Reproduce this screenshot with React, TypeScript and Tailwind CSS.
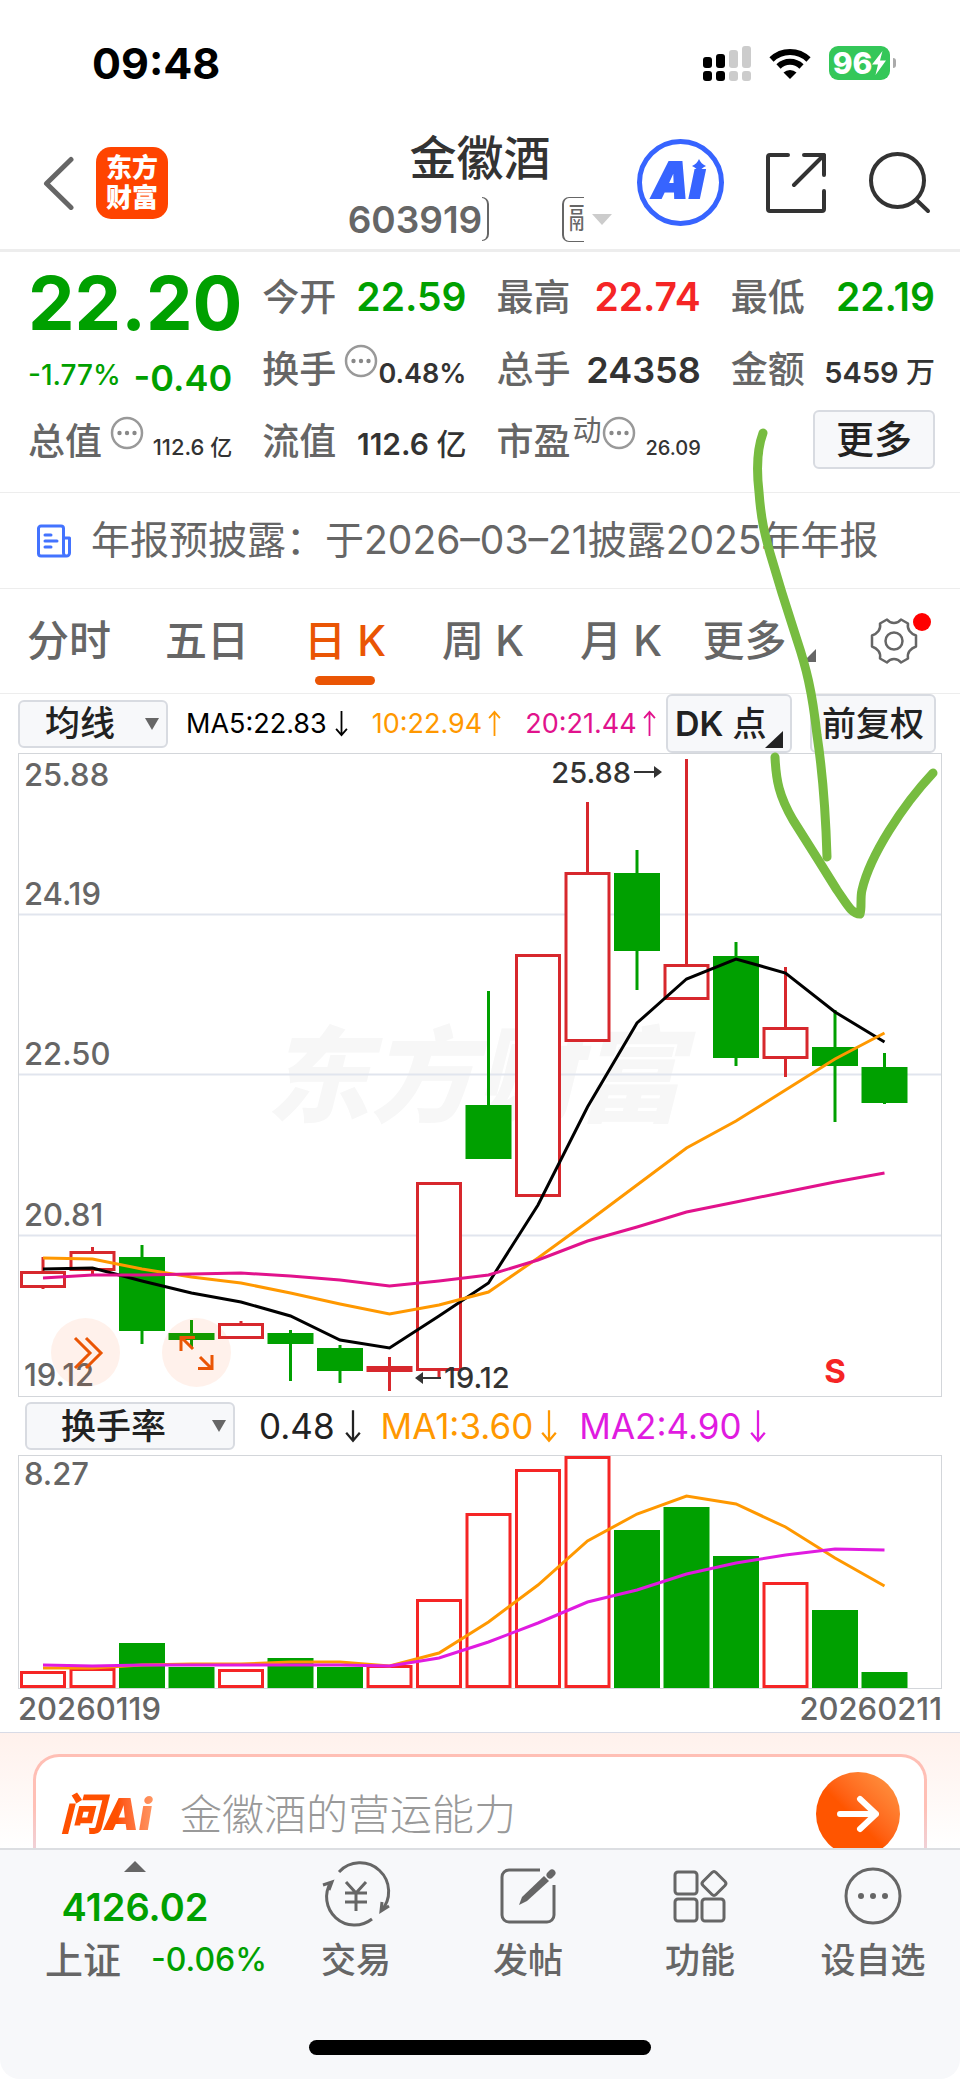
import type { ReactNode } from "react";

type Candle = { up: boolean; top: number; bottom: number; high: number; low: number; vol: number; volUp?: boolean };

// y values are in chart units, measured from the top edge of each plot
const candles: Candle[] = [
    { up: true, top: 518, bottom: 535, high: 504, low: 536, vol: 216 },
    { up: true, top: 498, bottom: 518, high: 494, low: 522, vol: 213 },
    { up: false, top: 504, bottom: 578, high: 492, low: 591, vol: 188 },
    { up: false, top: 580, bottom: 587, high: 567, low: 594, vol: 212 },
    { up: true, top: 570, bottom: 586, high: 568, low: 586, vol: 214 },
    { up: false, top: 580, bottom: 591, high: 577, low: 628, vol: 203 },
    { up: false, top: 595, bottom: 618, high: 592, low: 630, vol: 212 },
    { up: true, top: 613, bottom: 619, high: 604, low: 638, vol: 210 },
    { up: true, top: 429, bottom: 618, high: 429, low: 624, vol: 144 },
    { up: false, top: 352, bottom: 406, high: 238, low: 406, vol: 58, volUp: true },
    { up: true, top: 201, bottom: 444, high: 201, low: 444, vol: 14 },
    { up: true, top: 119, bottom: 289, high: 49, low: 289, vol: 1 },
    { up: false, top: 120, bottom: 198, high: 97, low: 237, vol: 75 },
    { up: true, top: 211, bottom: 247, high: 6, low: 247, vol: 52, volUp: false },
    { up: false, top: 203, bottom: 305, high: 189, low: 313, vol: 101 },
    { up: true, top: 274, bottom: 306, high: 214, low: 324, vol: 127 },
    { up: false, top: 294, bottom: 313, high: 257, low: 369, vol: 155 },
    { up: false, top: 314, bottom: 350, high: 300, low: 351, vol: 217 },
];

const ma5 = [516, 515, 528, 540, 549, 563, 587, 595, 563, 530, 452, 354, 270, 226, 206, 220, 259, 289];
const ma10 = [505, 506, 516, 524, 530, 540, 551, 561, 552, 539, 505, 469, 432, 395, 368, 337, 306, 280];
const ma20 = [525, 522, 522, 521, 520, 523, 527, 533, 528, 522, 507, 488, 474, 459, 449, 439, 429, 420];
const volMa1 = [213, 213, 210, 209, 209, 207, 207, 211, 198, 167, 130, 86, 59, 41, 49, 72, 103, 131];
const volMa2 = [210, 211, 210, 210, 210, 210, 210, 211, 203, 187, 168, 147, 135, 119, 108, 100, 94, 95];

const priceLabels = [
    { text: "25.88", y: 33 },
    { text: "24.19", y: 152 },
    { text: "22.50", y: 312 },
    { text: "20.81", y: 473 },
    { text: "19.12", y: 633 },
];

const tabs = ["分时", "五日", "日 K", "周 K", "月 K"];

const candleX = (i: number) => 25 + i * 49.5;
const toPoints = (values: number[]) => values.map((y, i) => `${candleX(i)},${y}`).join(" ");

const MoreDots = () => (
    <svg viewBox="0 0 34 34" className="size-[34px] shrink-0 self-start" aria-hidden="true">
        <circle cx="17" cy="17" r="15" fill="none" stroke="#999" strokeWidth="2.5" />
        <circle cx="9.5" cy="17" r="2.2" fill="#888" />
        <circle cx="17" cy="17" r="2.2" fill="#888" />
        <circle cx="24.5" cy="17" r="2.2" fill="#888" />
    </svg>
);

const Trend = ({ up = false, className = "" }: { up?: boolean; className?: string }) => (
    <svg viewBox="0 0 14 30" className={className} fill="none" stroke="currentColor" strokeWidth="2" aria-hidden="true">
        {up ? <path d="M7 29V2M1 9l6-7 6 7" /> : <path d="M7 1v27M1 21l6 7 6-7" />}
    </svg>
);

const Quote = ({ label, children }: { label: string; children: ReactNode }) => (
    <div className="flex h-[72px] items-baseline whitespace-nowrap">
        <span className="text-[37px] leading-[72px] font-medium text-[#666]">{label}</span>
        {children}
    </div>
);

const StatusBar = () => (
    <div className="flex h-[126px] items-center justify-between pr-[64px] pl-[92px]">
        <span className="text-[43px] leading-none font-bold text-black">09:48</span>
        <div className="flex items-center gap-[18px]">
            <svg viewBox="0 0 48 35" className="h-[35px] w-12" aria-hidden="true">
                <g fill="#000">
                    <rect x="0" y="11" width="9" height="11" rx="3" />
                    <rect x="0" y="25" width="9" height="10" rx="3" />
                    <rect x="13" y="8" width="9" height="14" rx="3" />
                    <rect x="13" y="25" width="9" height="10" rx="3" />
                </g>
                <g fill="#ccc">
                    <rect x="26" y="4" width="9" height="18" rx="3" />
                    <rect x="26" y="25" width="9" height="10" rx="3" />
                    <rect x="39" y="0" width="9" height="22" rx="3" />
                    <rect x="39" y="25" width="9" height="10" rx="3" />
                </g>
            </svg>
            <svg viewBox="0 0 42 31" className="h-[31px] w-[42px]" aria-hidden="true">
                <g fill="none" stroke="#000" strokeWidth="6">
                    <path d="M2.5 11.5a26.500 26.500 0 0 1 37 0" />
                    <path d="M9.500 18.500a16.500 16.500 0 0 1 23 0" />
                </g>
                <path d="M21 31l-6.500-6.500a9.500 9.500 0 0 1 13 0z" fill="#000" />
            </svg>
            <div className="flex items-center gap-[3px]">
                <div className="flex h-[34px] w-[61px] items-center justify-center rounded-[9px] bg-[#34c759] text-white">
                    <span className="text-[30px] leading-none font-extrabold">96</span>
                    <svg viewBox="0 0 14 24" className="h-6 w-3.5" aria-hidden="true">
                        <path d="M10.500 0L0 13.500h6L3.500 24 14 9.500H8z" fill="#fff" />
                    </svg>
                </div>
                <span className="h-[10px] w-[3px] rounded-r-full bg-[#aaa]" />
            </div>
        </div>
    </div>
);

const Header = () => (
    <header className="grid h-[126px] grid-cols-[1fr_auto_1fr] border-b-[3px] border-[#ededed] px-[28px]">
        <div className="flex items-center pb-[10px] pl-3.5">
            <button aria-label="返回">
                <svg viewBox="0 0 54 54" className="size-[54px]" aria-hidden="true">
                    <path d="M29 3.500L4.500 27.500 29 51.500" fill="none" stroke="#666" strokeWidth="5" strokeLinecap="round" strokeLinejoin="round" />
                </svg>
            </button>
            <a href="#home" className="grid size-[72px] place-content-center rounded-[15px] bg-[#ff4400] text-center text-[26px] leading-[30px] font-black text-white">
                东方
                <br />
                财富
            </a>
        </div>
        <div className="pt-1">
            <h1 className="text-center text-[47px] leading-[56px] font-medium text-[#333]">金徽酒</h1>
            <div className="flex h-[60px] items-center pt-1.5 text-[#666]">
                <span className="text-[37px] leading-none font-semibold">603919</span>
                <span className="h-[44px] w-[7px] rounded-r-[7px] border-y border-r-2 border-[#666]" />
                <span className="ml-[73px] h-[45px] w-[22px] overflow-hidden rounded-l-[7px] border-y border-l-2 border-[#666] pl-1 text-[29px] leading-[42px] whitespace-nowrap">融</span>
                <svg viewBox="0 0 20 11" className="ml-2 h-[11px] w-5" aria-hidden="true">
                    <path d="M0 0h20L10 11z" fill="#ccc" />
                </svg>
            </div>
        </div>
        <div className="flex items-center justify-end gap-[42px] pb-[10px]">
            <button aria-label="Ai">
                <svg viewBox="0 0 87 87" className="size-[87px]" aria-hidden="true">
                    <circle cx="43.500" cy="43.500" r="41" fill="#fff" stroke="#3764ff" strokeWidth="5" />
                    <g className="font-['Open_Sans',sans-serif]" fontSize="50" fontWeight="800" fontStyle="italic" fill="#3764ff" stroke="#3764ff" strokeWidth="2">
                        <text x="17" y="59">A</text>
                        <text x="52" y="59">ı</text>
                    </g>
                    <path d="M62 20q2 5 7 7-5 2-7 7-2-5-7-7 5-2 7-7z" fill="#3764ff" />
                </svg>
            </button>
            <button aria-label="分享">
                <svg viewBox="0 0 60 60" className="size-[60px]" fill="none" stroke="#333" strokeWidth="4" strokeLinecap="round" strokeLinejoin="round" aria-hidden="true">
                    <path d="M22 2H4a2 2 0 0 0-2 2v52a2 2 0 0 0 2 2h52a2 2 0 0 0 2-2V38M38 2h20v20M58 2L28 32" />
                </svg>
            </button>
            <button aria-label="搜索">
                <svg viewBox="0 0 64 64" className="size-[64px]" fill="none" stroke="#333" strokeWidth="4" strokeLinecap="round" aria-hidden="true">
                    <circle cx="29.500" cy="29.500" r="26.500" />
                    <path d="M48.500 49L60 60" />
                </svg>
            </button>
        </div>
    </header>
);

const QuotePanel = () => (
    <section className="grid grid-cols-4 gap-x-[30px] border-b border-[#ededed] pt-[10px] pr-[25px] pb-[14px] pl-[28px]">
        <strong className="flex h-[72px] items-center pt-2.5 text-[74px] leading-none font-bold text-[#00a000]">22.20</strong>
        <Quote label="今开">
            <span className="ml-auto text-[39px] font-semibold text-[#00a000]">22.59</span>
        </Quote>
        <Quote label="最高">
            <span className="ml-auto text-[39px] font-semibold text-[#f52525]">22.74</span>
        </Quote>
        <Quote label="最低">
            <span className="ml-auto text-[39px] font-semibold text-[#00a000]">22.19</span>
        </Quote>

        <div className="flex h-[72px] items-center justify-between pt-4 text-[#00a000]">
            <span className="self-start text-[28px] leading-[50px] font-medium">-1.77%</span>
            <span className="text-[36px] leading-none font-semibold">-0.40</span>
        </div>
        <Quote label="换手">
            <span className="ml-2 self-start pt-2.5"><MoreDots /></span>
            <span className="ml-auto text-[27px] font-semibold text-[#333]">0.48%</span>
        </Quote>
        <Quote label="总手">
            <span className="ml-auto text-[36px] font-semibold text-[#333]">24358</span>
        </Quote>
        <Quote label="金额">
            <span className="ml-auto text-[29px] font-semibold text-[#333]">5459 <span className="font-medium">万</span></span>
        </Quote>

        <Quote label="总值">
            <span className="ml-2 self-start pt-2.5"><MoreDots /></span>
            <span className="ml-auto text-[22px] font-medium text-[#333]">112.6 亿</span>
        </Quote>
        <Quote label="流值">
            <span className="ml-auto text-[30px] font-semibold text-[#333]">112.6 <span className="font-medium">亿</span></span>
        </Quote>
        <Quote label="市盈">
            <span className="self-start pl-0.5 text-[29px] leading-[50px] text-[#666]">动</span>
            <span className="self-start pt-2.5"><MoreDots /></span>
            <span className="ml-auto text-[20px] font-medium text-[#333]">26.09</span>
        </Quote>
        <div className="flex h-[72px] items-center justify-end pb-1.5">
            <button className="h-[59px] w-[122px] rounded-md border-2 border-[#d8dbe1] bg-[#f7f8fa] text-[38px] leading-none font-medium text-[#222]">更多</button>
        </div>
    </section>
);

const News = () => (
    <a href="#news" className="flex h-24 items-center gap-5 border-b border-[#ededed] pl-[37px] text-[39px] text-[#666]">
        <svg viewBox="0 0 34 34" className="size-[34px] shrink-0" fill="none" stroke="#4373ff" strokeWidth="3" strokeLinecap="round" strokeLinejoin="round" aria-hidden="true">
            <path d="M26 32H4a2.500 2.500 0 0 1-2.500-2.500v-25A2.500 2.500 0 0 1 4 2h20a2.500 2.500 0 0 1 2.500 2.500V29a3 3 0 0 0 6 0V14h-6M29.500 32H26M8 11h6M8 17h12M8 23h6" />
        </svg>
        <span className="whitespace-nowrap">年报预披露：于2026–03–21披露2025年年报</span>
    </a>
);

const Tabs = () => (
    <nav className="grid h-[105px] grid-cols-[repeat(6,23fr)_22fr] border-b border-[#ededed] text-[42px] leading-none font-medium text-[#666]">
        {tabs.map((tab) => (
            <button key={tab} className={tab === "日 K" ? "relative text-[#ea5504]" : "relative"}>
                {tab}
                {tab === "日 K" && <span className="absolute bottom-2 left-1/2 h-[9px] w-[60px] -translate-x-1/2 rounded-full bg-[#ea5504]" />}
            </button>
        ))}
        <button className="flex items-center justify-center gap-4">
            更多
            <svg viewBox="0 0 13 13" className="mt-7 size-[13px]" aria-hidden="true">
                <path d="M13 0v13H0z" fill="#666" />
            </svg>
        </button>
        <button aria-label="设置" className="relative grid place-items-center">
            <svg viewBox="0 0 48 48" className="size-12" fill="none" stroke="#666" strokeWidth="2.5" strokeLinejoin="round" aria-hidden="true">
                <path d="M17 2.500C19 5 21.500 6 24 6s5-1 7-3.500l7 4c-.5 3 0 5.500 1.500 7.500s3.500 3.500 6.500 4.500v11c-3 1-5 2.500-6.500 4.500S37.500 38.500 38 41.500l-7 4C29 43 26.500 42 24 42s-5 1-7 3.500l-7-4c.5-3 0-5.500-1.500-7.500S5 30.500 2 29.500v-11c3-1 5-2.500 6.500-4.500S10.500 9.500 10 6.500z" />
                <circle cx="24" cy="24" r="8.500" />
            </svg>
            <span className="absolute top-[24px] right-[29px] size-[18px] rounded-full bg-[#ff0000]" />
        </button>
    </nav>
);

const Picker = ({ label, className }: { label: string; className: string }) => (
    <label className="relative">
        <select aria-label={label} className={`${className} h-12 appearance-none rounded-md border-2 border-[#d8dbe1] bg-[#f7f8fa] text-[35px] leading-none font-medium text-[#222]`}>
            <option>{label}</option>
        </select>
        <svg viewBox="0 0 14 12" className="pointer-events-none absolute top-[18px] right-[9px] h-3 w-3.5" aria-hidden="true">
            <path d="M0 0h14L7 12z" fill="#666" />
        </svg>
    </label>
);

const Averages = () => (
    <div className="flex h-[59px] items-center pr-[24px] pl-[18px] text-[27px] leading-none">
        <Picker label="均线" className="w-[150px] pl-[25px]" />
        <span className="ml-[18px] flex items-center gap-2 text-black">MA5:22.83<Trend className="h-[27px] w-[13px]" /></span>
        <span className="ml-6 flex items-center gap-1.5 text-[#ff9800]">10:22.94<Trend up className="h-[27px] w-[13px]" /></span>
        <span className="ml-6 flex items-center gap-1.5 text-[#e1128c]">20:21.44<Trend up className="h-[27px] w-[13px]" /></span>
        <div className="ml-auto flex gap-[18px] text-[34px] font-medium text-[#222]">
            <button className="relative h-[59px] w-[126px] rounded-md border-2 border-[#d8dbe1] bg-[#f7f8fa] pl-[7px] text-left whitespace-nowrap">
                <span className="font-semibold">DK</span> 点
                <svg viewBox="0 0 18 17" className="absolute right-[7px] bottom-[3px] h-[17px] w-[18px]" aria-hidden="true">
                    <path d="M18 0v17H0z" fill="#222" />
                </svg>
            </button>
            <button className="h-[59px] w-[126px] rounded-md border-2 border-[#d8dbe1] bg-[#f7f8fa] whitespace-nowrap">前复权</button>
        </div>
    </div>
);

const PriceChart = () => (
    <div className="relative mx-[18px]">
        <svg viewBox="0 0 924 644" className="block w-full" role="img" aria-label="日K">
            <text x="248" y="361" fontSize="104" fontWeight="900" fontStyle="italic" fill="#f7f7f7">东方财富</text>
            <path d="M0 161.500h924M0 321.500h924M0 482.500h924" stroke="#e1e5ee" strokeWidth="2" />
            <rect x="0.500" y="0.500" width="923" height="643" fill="none" stroke="#d3d6da" />
            {priceLabels.map((p) => (
                <text key={p.text} x="6" y={p.y} fontSize="31" fontWeight="500" fill="#666">{p.text}</text>
            ))}
            {candles.map((c, i) => {
                const color = c.up ? "#d7282d" : "#00a000";
                return (
                    <g key={i} stroke={color} strokeWidth="3">
                        <path d={`M${candleX(i)} ${c.high}V${c.low}`} />
                        <rect x={candleX(i) - 21.5} y={c.top + 1.5} width="43" height={c.bottom - c.top - 3} fill={c.up ? "#fff" : color} />
                    </g>
                );
            })}
            <g fill="none" strokeWidth="3">
                <polyline points={toPoints(ma5)} stroke="#000" />
                <polyline points={toPoints(ma10)} stroke="#ff9800" />
                <polyline points={toPoints(ma20)} stroke="#e1128c" />
            </g>
            <g fontSize="29" fontWeight="500" fill="#333">
                <text x="613" y="30" textAnchor="end">25.88</text>
                <path d="M616 18h20v-5l8 6-8 6v-5h-20z" />
                <text x="426" y="635">19.12</text>
                <path d="M423 624h-18v-5l-8 6 8 6v-5h18z" />
            </g>
            <text x="817" y="630" fontSize="33" fontWeight="700" textAnchor="middle" fill="#f52525">S</text>
        </svg>
        <div className="absolute bottom-[10px] left-[33px] flex gap-[42px]">
            <button aria-label="展开" className="grid size-[69px] place-items-center rounded-full bg-[#ff5000]/8">
                <svg viewBox="0 0 69 69" fill="none" stroke="#ea5504" strokeWidth="3" aria-hidden="true">
                    <path d="M24 20l15 15-15 15M35 20l15 15-15 15" />
                </svg>
            </button>
            <button aria-label="全屏" className="grid size-[69px] place-items-center rounded-full bg-[#ff5000]/8">
                <svg viewBox="0 0 69 69" fill="none" stroke="#ea5504" strokeWidth="3" aria-hidden="true">
                    <path d="M19 33V19.500h14M19.500 19.500L31 31M50 37v13.500H36M49.500 50.500L38 39" />
                </svg>
            </button>
        </div>
    </div>
);

const Turnover = () => (
    <div className="flex h-[58px] items-center pl-[25px] text-[35px] leading-none">
        <Picker label="换手率" className="w-[210px] pl-[34px]" />
        <span className="ml-6 flex items-center gap-2.5 text-[#222]">0.48<Trend className="h-[34px] w-4" /></span>
        <span className="ml-5 flex items-center gap-2 text-[#ff9800]">MA1:3.60<Trend className="h-[34px] w-4" /></span>
        <span className="ml-[22px] flex items-center gap-2 text-[#e01be0]">MA2:4.90<Trend className="h-[34px] w-4" /></span>
    </div>
);

const VolumeChart = () => (
    <div className="mx-[18px]">
        <svg viewBox="0 0 924 235" className="block w-full" role="img" aria-label="换手率">
            <rect x="0.500" y="0.500" width="923" height="233" fill="none" stroke="#d3d6da" />
            <text x="6" y="30" fontSize="31" fontWeight="500" fill="#666">8.27</text>
            {candles.map((c, i) => {
                const up = c.volUp ?? c.up;
                return (
                    <rect
                        key={i}
                        x={candleX(i) - 21.5}
                        y={c.vol + 1.5}
                        width="43"
                        height={230 - c.vol}
                        fill={up ? "#fff" : "#00a000"}
                        stroke={up ? "#f52525" : "#00a000"}
                        strokeWidth="3"
                    />
                );
            })}
            <g fill="none" strokeWidth="3">
                <polyline points={toPoints(volMa1)} stroke="#ff9800" />
                <polyline points={toPoints(volMa2)} stroke="#e01be0" />
            </g>
        </svg>
        <div className="flex h-[42px] items-center justify-between pb-1.5 text-[31px] leading-none font-medium text-[#666]">
            <span>20260119</span>
            <span>20260211</span>
        </div>
    </div>
);

const AskAi = () => (
    <section className="h-[116px] overflow-hidden border-t border-[#d8dbe6] bg-linear-to-b from-[#fff1ec] to-white px-[33px] pt-[21px]">
        <form className="rounded-[26px] bg-linear-to-b from-[#ffbfb5] from-40% to-[#dfe0f5] p-[3px]">
            <div className="flex h-[126px] items-start rounded-[23px] bg-white pt-[15px] pr-6 pl-6">
                <span className="mr-6 bg-linear-to-r from-[#ff5000] from-60% to-[#ff9a66] bg-clip-text pr-1 text-[44px] leading-[84px] font-black text-transparent italic">问Ai</span>
                <input aria-label="问Ai" placeholder="金徽酒的营运能力" className="h-[84px] min-w-0 flex-1 text-[42px] font-light outline-none placeholder:text-[#999]" />
                <button type="button" aria-label="提问" className="grid size-[84px] place-items-center rounded-full bg-linear-to-tr from-[#ff5500] from-45% to-[#ff9a45]">
                    <svg viewBox="0 0 42 38" className="h-[38px] w-[42px]" fill="none" stroke="#fff" strokeWidth="6" strokeLinecap="round" strokeLinejoin="round" aria-hidden="true">
                        <path d="M3 19h36M23 4l16 15-16 15" />
                    </svg>
                </button>
            </div>
        </form>
    </section>
);

const navItems = [
    {
        label: "交易",
        icon: (
            <>
                <path d="M14 7A28 28 0 0 1 56 46M64 41l-8 5 1-9M6 17A28 28 0 0 0 47 54M-2 20l9-3-3 8" />
                <path d="M21 17l10 11 10-11M20 28h22M20 37h22M31 28v18" />
            </>
        ),
    },
    {
        label: "发帖",
        icon: (
            <>
                <path d="M43 5H12a7 7 0 0 0-7 7v38a7 7 0 0 0 7 7h38a7 7 0 0 0 7-7V20" />
                <path d="M22 40l3-8 22-21 5 5-22 20z" fill="#666" stroke="none" />
                <path d="M53 10l2-2" strokeWidth="7" strokeLinecap="round" />
            </>
        ),
    },
    {
        label: "功能",
        icon: (
            <>
                <rect x="6" y="7" width="22" height="22" rx="3" />
                <rect x="6" y="34" width="22" height="22" rx="3" />
                <rect x="33" y="34" width="22" height="22" rx="3" />
                <path d="M43 7.500q2-2 4 0l9 9q2 2 0 4l-9 9q-2 2-4 0l-9-9q-2-2 0-4z" />
            </>
        ),
    },
    {
        label: "设自选",
        icon: (
            <>
                <circle cx="31" cy="31" r="27" />
                <g fill="#666" stroke="none">
                    <circle cx="19" cy="31" r="3" />
                    <circle cx="31" cy="31" r="3" />
                    <circle cx="43" cy="31" r="3" />
                </g>
            </>
        ),
    },
];

const BottomBar = () => (
    <footer className="flex flex-col rounded-b-[20px] border-t-2 border-[#dcdee2] bg-[#f7f8fa]">
        <div className="grid h-[190px] grid-cols-[270fr_172fr_172fr_172fr_174fr] pt-[11px]">
            <button className="flex flex-col items-center">
                <svg viewBox="0 0 22 11" className="h-[11px] w-[22px]" aria-hidden="true">
                    <path d="M11 0l11 11H0z" fill="#666" />
                </svg>
                <span className="mt-[7px] text-[38px] leading-[56px] font-semibold text-[#00a000]">4126.02</span>
                <span className="flex items-center gap-[30px] pl-[42px] text-[38px] leading-[50px] font-medium whitespace-nowrap text-[#666]">
                    上证
                    <span className="text-[32px] text-[#00a000]">-0.06%</span>
                </span>
            </button>
            {navItems.map((item) => (
                <button key={item.label} className="flex flex-col items-center pt-1 text-[35px] leading-[50px] font-medium text-[#666]">
                    <svg viewBox="0 0 62 62" className="mb-2 size-[62px] overflow-visible" fill="none" stroke="#666" strokeWidth="3" aria-hidden="true">
                        {item.icon}
                    </svg>
                    {item.label}
                </button>
            ))}
        </div>
        <span className="mx-auto mb-6 h-[15px] w-[342px] rounded-full bg-black" />
    </footer>
);

// freehand marker strokes over the chart
const Scribble = () => (
    <svg viewBox="0 0 960 2079" className="pointer-events-none absolute inset-0 h-full w-full" fill="none" stroke="#77bc40" strokeWidth="9" strokeLinecap="round" strokeLinejoin="round" aria-hidden="true">
        <path d="M763 433C756 452 757 475 759 492 761 520 765 535 770 553L782 593 797 640C806 667 812 690 817 735 823 775 826 823 827 857" />
        <path d="M775 757C776 780 779 796 793 820L817 858 837 890C848 906 852 914 860 914 862 908 860 898 862 890 870 855 903 805 933 773" />
    </svg>
);

const App = () => (
    <main className="relative bg-white font-['Inter','Noto_Sans_CJK_SC',sans-serif]">
        <StatusBar />
        <Header />
        <QuotePanel />
        <News />
        <Tabs />
        <Averages />
        <PriceChart />
        <Turnover />
        <VolumeChart />
        <AskAi />
        <BottomBar />
        <Scribble />
    </main>
);

export default App;
